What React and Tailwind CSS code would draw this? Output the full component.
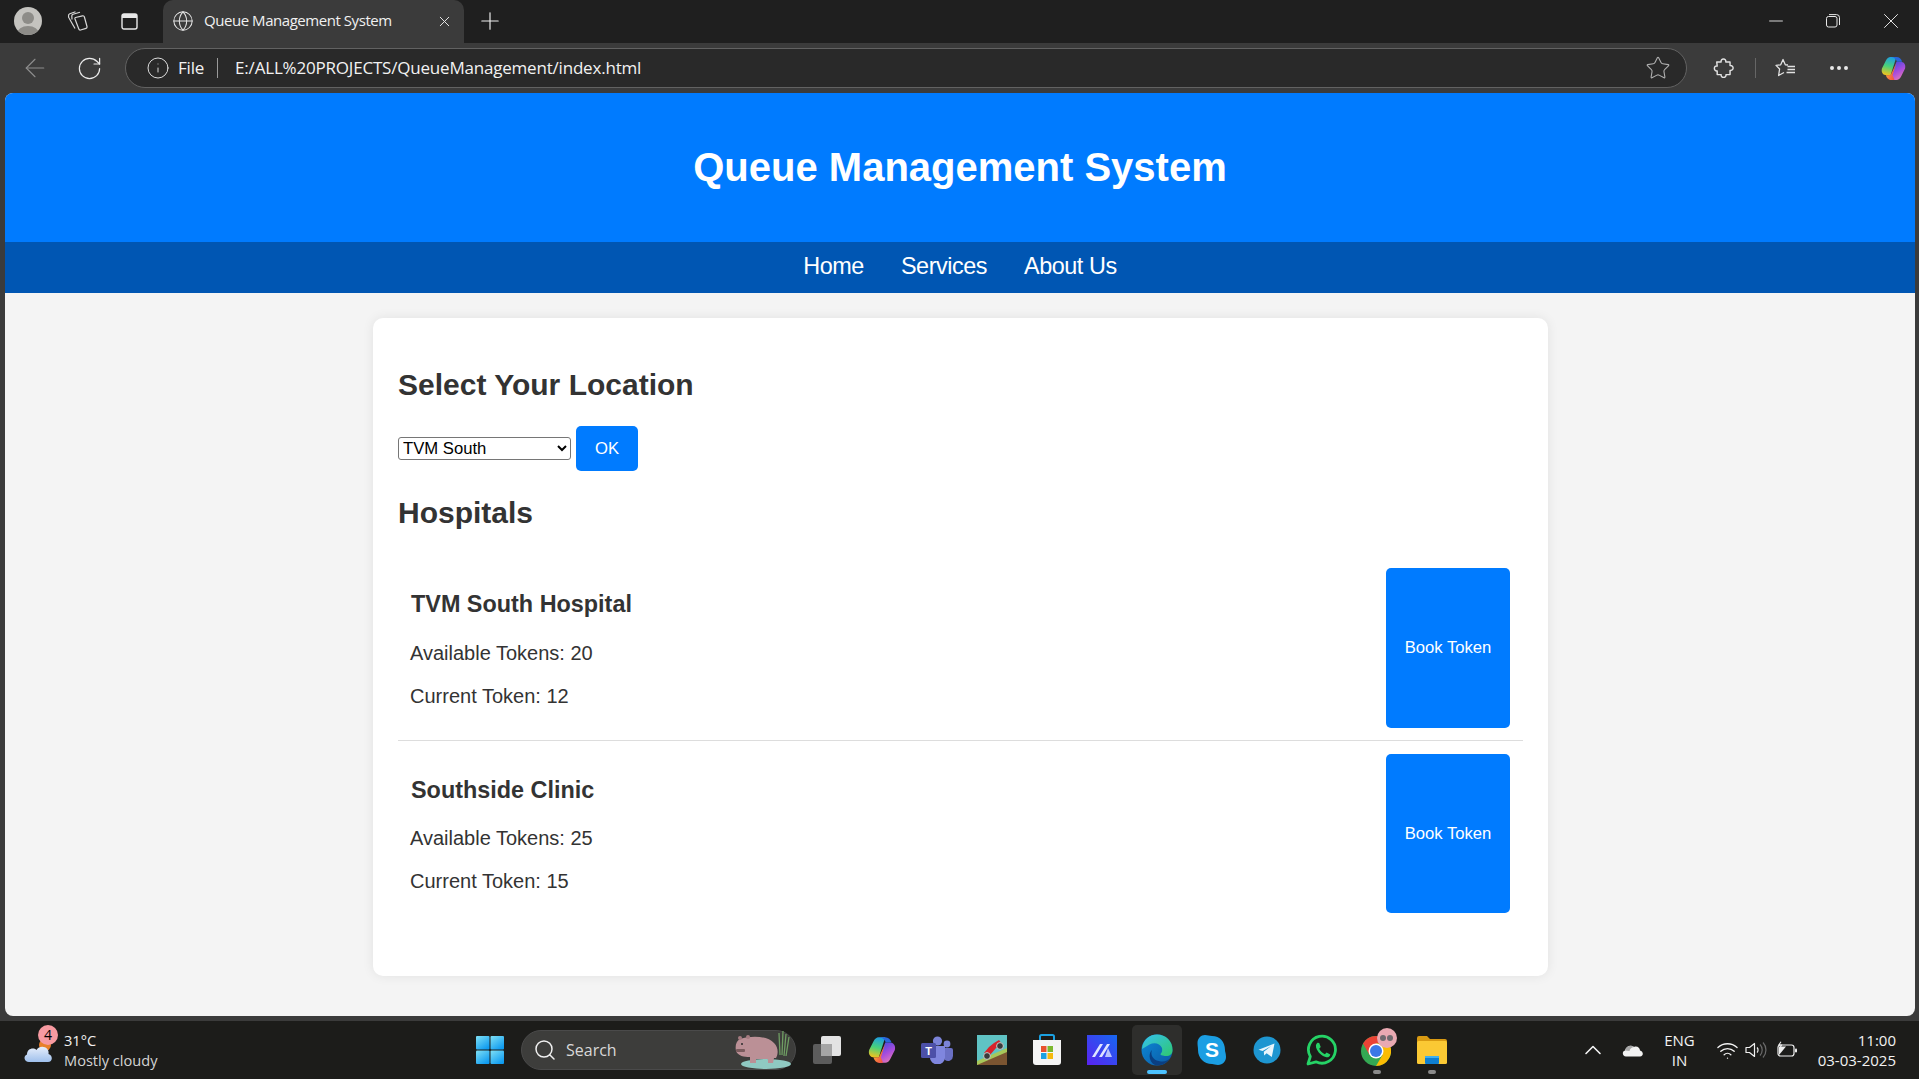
import React from "react";
import { Globe, X, Plus, ArrowLeft, RotateCw, Info, Star, Minus, Search, ChevronUp, Wifi, Ellipsis } from "lucide-react";

const sans = "font-['Liberation_Sans',Arial,sans-serif]";
const ui = "font-['Open_Sans','Noto_Sans',sans-serif]";

function TabsIcon() {
  return (
    <svg width="21" height="20" viewBox="0 0 21 20" fill="none" stroke="#d8d8d8" strokeWidth="1.2" strokeLinejoin="round">
      <path d="M8.5 6.5 L15.5 4.8 Q17 4.5 17.4 6 L20 15.5 Q20.3 17 19 17.4 L13.6 19 Q12.2 19.3 11.8 18 L8 8 Q7.7 6.8 8.5 6.5 Z" />
      <path d="M5 8.5 L4.8 4.8 Q4.8 3.6 6 3.3 L13 1.2" />
      <path d="M1.8 7 L1.5 5 Q1.4 3.4 2.8 2.8 L8.5 0.8" />
      <path d="M2 7 L8 17.5" />
    </svg>
  );
}
function VerticalTabs() {
  return (
    <svg width="17" height="17" viewBox="0 0 17 17" fill="none">
      <rect x="1" y="1" width="15" height="15" rx="2" stroke="#e8e8e8" strokeWidth="1.4" />
      <rect x="1" y="1" width="15" height="4" fill="#e8e8e8" />
    </svg>
  );
}
function Avatar() {
  return (
    <svg width="28" height="28" viewBox="0 0 28 28">
      <defs><clipPath id="av"><circle cx="14" cy="14" r="14" /></clipPath></defs>
      <circle cx="14" cy="14" r="14" fill="#c4c3bf" />
      <g clipPath="url(#av)">
        <circle cx="14" cy="11" r="6" fill="#8d8c88" />
        <ellipse cx="14" cy="27" rx="11" ry="8" fill="#8d8c88" />
      </g>
    </svg>
  );
}
function Restore() {
  return (
    <svg width="14" height="14" viewBox="0 0 14 14" fill="none" stroke="#e8e8e8" strokeWidth="1">
      <rect x="0.5" y="2.5" width="10.5" height="10.5" rx="2" />
      <path d="M3 .6h7.5a3 3 0 0 1 3 3V11" />
    </svg>
  );
}
function Puzzle() {
  return (
    <svg width="22" height="22" viewBox="0 0 20 20" fill="none" stroke="#e2e2e2" strokeWidth="1.3" strokeLinejoin="round">
      <path d="M7.4 4.5 C6.6 1 12.4 1 11.6 4.5 L15.5 4.5 L15.5 7.8 C19.2 7.2 19.2 12.8 15.5 12.2 L15.5 16 L11.8 16 C12.4 19.4 6.8 19.4 7.4 16 L3.8 16 L3.8 12.6 C0.4 13.2 0.4 7.6 3.8 8.2 L3.4 4.5 Z" />
    </svg>
  );
}
function FavStar() {
  return (
    <svg width="22" height="20" viewBox="0 0 22 20" fill="none" stroke="#e2e2e2" strokeWidth="1.3" strokeLinejoin="round">
      <path d="M13 7 L10.3 6.8 L8 1.5 L5.7 6.8 L1 7.4 L4.6 11 L3.6 17.5 L9 14.5" />
      <path d="M12.5 8.5h7.5M12.5 11.5h7.5M11.5 14.5h8.5" />
    </svg>
  );
}
function CopilotIcon({ size = 27 }) {
  return (
    <svg width={size} height={size} viewBox="0 0 28 28">
      <defs>
        <linearGradient id="cpA" x1="0.5" y1="0" x2="0.3" y2="1">
          <stop offset="0" stopColor="#1f9fe0" /><stop offset="0.5" stopColor="#48d27a" /><stop offset="1" stopColor="#f6c21c" />
        </linearGradient>
        <linearGradient id="cpB" x1="0.3" y1="0" x2="0.8" y2="1">
          <stop offset="0" stopColor="#4a4ce0" /><stop offset="0.5" stopColor="#a84ddc" /><stop offset="1" stopColor="#ee7fb0" />
        </linearGradient>
        <linearGradient id="cpC" x1="0" y1="0" x2="1" y2="1">
          <stop offset="0" stopColor="#ffa13c" /><stop offset="1" stopColor="#ee4444" />
        </linearGradient>
      </defs>
      <path d="M17 7 H21 C25 7 27 10 26 14 L22 22 C21 24.5 19 26 17 26 H11 L17 7 Z" fill="url(#cpB)" />
      <path d="M11 2 H17 L11 21 H7 C3 21 1 18 2 14 L6 6 C7 3.5 9 2 11 2 Z" fill="url(#cpA)" />
      <path d="M12 2 H17 C20 2 22 4 23 7 H17.5 C17 4.5 15 2.5 12 2 Z" fill="#2a66dc" />
      <path d="M6 21 H11 L11.5 23 C12 24.5 13.5 26 16 26 H11.5 C9 26 7 24 6 21 Z" fill="url(#cpC)" />
      <path d="M9 21 H11 L17 8 L13 21 L15 26 H11 C10 25 9 23 9 21 Z" fill="url(#cpC)" />
    </svg>
  );
}
function Hippo() {
  return (
    <svg width="62" height="38" viewBox="0 0 62 38">
      <ellipse cx="34" cy="33" rx="25" ry="5" fill="#8fc9c2" />
      <path d="M47 2 L48 24 M51 0 L50 24 M54 3 L52 25 M57 6 L54 25" stroke="#6f9d63" strokeWidth="1.3" fill="none" />
      <path d="M8 8 C20 4 36 5 42 12 C47 17 46 24 44 27 L42 27 L41 32 L36 32 L36 28 L24 28 L24 32 L18 32 L18 26 C12 26 6 25 4 20 C3 15 4 10 8 8 Z" fill="#bb9096" />
      <circle cx="8" cy="7" r="2" fill="#a47b80" />
      <circle cx="16" cy="6" r="2" fill="#a47b80" />
      <circle cx="10" cy="13" r="1" fill="#2b2b2b" />
      <rect x="4" y="18" width="9" height="3" fill="#7a5b5d" rx="1" />
    </svg>
  );
}
function WinLogo() {
  return (
    <svg width="30" height="30" viewBox="0 0 30 30">
      <defs>
        <linearGradient id="win" x1="0" y1="0" x2="0.7" y2="1">
          <stop offset="0" stopColor="#7fe0f5" /><stop offset="1" stopColor="#0f9bf0" />
        </linearGradient>
      </defs>
      <rect x="1" y="1" width="13.5" height="13.5" rx="1" fill="url(#win)" />
      <rect x="15.5" y="1" width="13.5" height="13.5" rx="1" fill="url(#win)" />
      <rect x="1" y="15.5" width="13.5" height="13.5" rx="1" fill="url(#win)" />
      <rect x="15.5" y="15.5" width="13.5" height="13.5" rx="1" fill="url(#win)" />
    </svg>
  );
}
function TaskView() {
  return (
    <svg width="30" height="30" viewBox="0 0 30 30">
      <rect x="1" y="9" width="19" height="20" rx="2" fill="#5c5c5c" />
      <rect x="9" y="1" width="20" height="20" rx="2" fill="#e3e3e3" />
      <rect x="9" y="9" width="11" height="12" fill="#a5a5a5" />
    </svg>
  );
}
function Teams() {
  return (
    <svg width="32" height="28" viewBox="0 0 32 28">
      <circle cx="26" cy="8" r="3.4" fill="#7b83d8" />
      <path d="M20 12 h10 a2 2 0 0 1 2 2 v6 a5 5 0 0 1 -8 4 Z" fill="#6a70c4" />
      <circle cx="16.5" cy="5" r="4.6" fill="#7b83d8" />
      <path d="M9 10 h15 v12 a7 6 0 0 1 -15 0 Z" fill="#7f86de" />
      <rect x="0" y="7" width="15" height="15" rx="1.5" fill="#4c50a8" />
      <text x="7.5" y="18.5" textAnchor="middle" fill="#fff" fontSize="11" fontWeight="700" fontFamily="Liberation Sans">T</text>
    </svg>
  );
}
function HillGame() {
  return (
    <svg width="30" height="30" viewBox="0 0 30 30">
      <rect width="30" height="30" fill="#5fc3c4" />
      <path d="M0 26 L30 13 V30 H0 Z" fill="#a7c85a" />
      <path d="M0 30 L30 17 V30 H0 Z" fill="#7b5531" />
      <path d="M7 18 L12 12 L17 8 L22 5 L25 9 L19 13 L13 20 Z" fill="#d8232a" />
      <circle cx="10" cy="21" r="3.4" fill="#3a3a3a" stroke="#ccc" />
      <circle cx="23" cy="11" r="3.4" fill="#3a3a3a" stroke="#ccc" />
    </svg>
  );
}
function StoreIcon() {
  return (
    <svg width="30" height="32" viewBox="0 0 30 32">
      <path d="M8 6 V2.5 a1.5 1.5 0 0 1 1.5 -1.5 h11 a1.5 1.5 0 0 1 1.5 1.5 V6" fill="none" stroke="#1ba1e2" strokeWidth="2" />
      <path d="M1 6 H29 V28 a3 3 0 0 1 -3 3 H4 a3 3 0 0 1 -3 -3 Z" fill="#f4f4f4" />
      <rect x="9" y="12" width="5.5" height="6" fill="#e8512d" />
      <rect x="15.5" y="12" width="5.5" height="6" fill="#7cb82f" />
      <rect x="9" y="19" width="5.5" height="6" fill="#1ba1e2" />
      <rect x="15.5" y="19" width="5.5" height="6" fill="#f5b90d" />
    </svg>
  );
}
function MaIcon() {
  return (
    <svg width="30" height="30" viewBox="0 0 30 30">
      <defs>
        <linearGradient id="ma" x1="1" y1="0" x2="0" y2="1">
          <stop offset="0" stopColor="#1668f0" /><stop offset="1" stopColor="#5a22f0" />
        </linearGradient>
      </defs>
      <rect width="30" height="30" fill="url(#ma)" />
      <path d="M5 22 L13 9 H16 L8 22 Z M12 22 L20 9 H23 L15 22 Z" fill="#dfe4ff" />
      <path d="M21 13 L25 22 H18 Z" fill="#b9c3ff" />
    </svg>
  );
}
function Edge() {
  return (
    <svg width="32" height="32" viewBox="0 0 32 32">
      <defs>
        <linearGradient id="edA" x1="0" y1="0" x2="1" y2="1">
          <stop offset="0" stopColor="#35c1f1" /><stop offset="1" stopColor="#2fc86e" />
        </linearGradient>
        <linearGradient id="edB" x1="0" y1="0" x2="1" y2="1">
          <stop offset="0" stopColor="#0c8bd8" /><stop offset="1" stopColor="#0c59a4" />
        </linearGradient>
      </defs>
      <circle cx="16" cy="16" r="15.5" fill="url(#edB)" />
      <path d="M1 15 C2 5 9 .5 16 .5 C25 .5 31.5 7 31.5 16 C31.5 20 29 22 25 22 C22 22 19 21 19.5 20 C21 18 21.5 17 21 14 C19 9 13 8 8.5 10.5 C5 12.5 2.5 14 1 15 Z" fill="url(#edA)" />
      <path d="M14 31 C8 28 7 20 11 16 C9 21 12 27 20 27.5 C24 28 27 26.5 29 24 C27 28 21 32.5 14 31 Z" fill="#0a3f82" />
    </svg>
  );
}
function Skype() {
  return (
    <svg width="30" height="32" viewBox="0 0 30 32">
      <path d="M8 1 C11 1 12 2 15 2 C23 2 28 8 28 16 C28 18 29 19 29 23 C29 27 26 31 21 31 C18 31 17 30 15 30 C7 30 1 24 1 16 C1 13 0.5 12 0.5 9 C0.5 4.5 4 1 8 1 Z" fill="#1b9ee3" />
      <text x="15" y="23" textAnchor="middle" fill="#fff" fontSize="21" fontWeight="700" fontFamily="Liberation Sans">S</text>
    </svg>
  );
}
function Telegram() {
  return (
    <svg width="28" height="28" viewBox="0 0 28 28">
      <circle cx="14" cy="14" r="13.5" fill="#1e96d1" />
      <path d="M5.5 13.8 L21.5 7.5 L18.8 21 L13.6 17.3 L11.2 19.6 L10.8 15.7 L18.2 10 L9.6 15 Z" fill="#eaf6fc" />
    </svg>
  );
}
function WhatsApp() {
  return (
    <svg width="32" height="32" viewBox="0 0 32 32">
      <path d="M2 30 L4.3 22.5 A13.5 13.5 0 1 1 10 27.8 Z" fill="none" stroke="#25d366" strokeWidth="2.8" strokeLinejoin="round" />
      <path d="M11.5 8.8 C9.6 10 9.3 12.6 11 15.8 C13 19.5 16.5 22.6 20.4 23.2 C22.5 23.5 24 22.3 24.3 20.4 L20.6 18.5 L18.9 20.2 C16.6 19.3 14.3 17.1 13.2 14.7 L14.7 13 L13.2 9 Z" fill="#25d366" />
    </svg>
  );
}
function ChromeIcon() {
  return (
    <span className="relative block h-[32px] w-[32px]">
      <svg width="30" height="30" viewBox="0 0 30 30" className="absolute left-0 top-[2px]">
        <circle cx="15" cy="15" r="15" fill="#34a853" />
        <path d="M15 0 A15 15 0 0 1 28 7.5 L15 7.5 L8.5 19 L2 7.5 A15 15 0 0 1 15 0 Z" fill="#ea4335" />
        <path d="M28 7.5 A15 15 0 0 1 15 30 L21.5 19 L15 7.5 Z" fill="#fbbc04" />
        <circle cx="15" cy="15" r="7.5" fill="#fff" />
        <circle cx="15" cy="15" r="6" fill="#3b78e7" />
      </svg>
      <span className="absolute left-[16px] top-[-6px] flex h-[20px] w-[20px] items-center justify-center gap-[1px] rounded-full bg-[#e9a9b2]">
        <span className="h-[6px] w-[6px] rounded-full bg-[#6f6a6f]" />
        <span className="h-[6px] w-[6px] rounded-full bg-[#6f6a6f]" />
      </span>
    </span>
  );
}
function Folder() {
  return (
    <svg width="30" height="30" viewBox="0 0 30 30">
      <path d="M0 3 a2 2 0 0 1 2 -2 h8 l3 3 h15 a2 2 0 0 1 2 2 v4 H0 Z" fill="#d99a12" />
      <rect y="6" width="30" height="23" rx="1.5" fill="#fbc934" />
      <rect x="8" y="21" width="14" height="8" rx="1" fill="#0f7fd0" />
      <rect x="8" y="21" width="14" height="2" fill="#3fb0ee" />
    </svg>
  );
}
function Weather() {
  return (
    <svg width="32" height="28" viewBox="0 0 32 28">
      <defs>
        <linearGradient id="cl" x1="0" y1="0" x2="0" y2="1">
          <stop offset="0" stopColor="#e6eefb" /><stop offset="1" stopColor="#9fc0ec" />
        </linearGradient>
      </defs>
      <circle cx="22" cy="9" r="6" fill="#e8802a" />
      <path d="M6 26 C1 26 0 20 4 18.5 C4 13 10 11 13.5 14 C17 8 27 11 25.5 18 C30 19 30 26 25 26 Z" fill="url(#cl)" />
    </svg>
  );
}
function Cloud() {
  return (
    <svg width="22" height="14" viewBox="0 0 22 14">
      <path d="M4 13.5 C0.5 13.5 -0.5 8.5 3 7.5 C4 3 9 1.5 12 4 C15 2.5 18 5 18 7.5 C21.5 8 22 13.5 18 13.5 Z" fill="#f2f2f2" />
      <path d="M3 7.5 C4 3 9 1.5 12 4 C9 4.5 8 6 7.5 8 Z" fill="#a8a8a8" />
    </svg>
  );
}
function Speaker() {
  return (
    <svg width="22" height="18" viewBox="0 0 22 18" fill="none" stroke="#f0f0f0" strokeWidth="1.2">
      <path d="M1 6.5 H4.5 L9.5 2.5 V15.5 L4.5 11.5 H1 Z" strokeLinejoin="round" />
      <path d="M12 6.5 a3.5 3.5 0 0 1 0 5" />
      <path d="M15 3.5 a8 8 0 0 1 0 11 M18 1.5 a11 11 0 0 1 0 15" stroke="#6b6b6b" />
    </svg>
  );
}
function Battery() {
  return (
    <svg width="22" height="18" viewBox="0 0 22 18" fill="none">
      <rect x="1" y="4" width="16" height="11" rx="2.5" stroke="#f0f0f0" strokeWidth="1.2" />
      <rect x="18" y="7.5" width="2" height="4" rx="1" fill="#f0f0f0" />
      <path d="M2 14 L2 5.5 L9 5.5 Z" fill="#f0f0f0" />
      <path d="M4 0.8 L1.8 4 H4.5 L3 7" stroke="#f0f0f0" strokeWidth="1.1" />
    </svg>
  );
}

function TabStrip() {
  return (
    <div className={`flex h-[43px] items-end bg-[#1f1f1f] text-[#f0f0f0] ${ui}`}>
      <div className="flex h-[43px] w-[163px] items-center pb-[1px] pl-[14px]">
        <span className="flex w-[28px] items-center"><Avatar /></span>
        <span className="ml-[25px] flex w-[21px]"><TabsIcon /></span>
        <span className="ml-[33px] flex w-[17px]"><VerticalTabs /></span>
      </div>
      <div className="flex h-[43px] w-[301px] items-center rounded-t-[10px] bg-[#3b3b3b] pb-[1px] pl-[9px]">
        <Globe size={22} strokeWidth={1.1} color="#e6e6e6" />
        <span className="ml-[10px] mb-[1px] w-[207px] truncate text-[15px] tracking-[-0.45px]">Queue Management System</span>
        <X size={17} strokeWidth={1.4} color="#e6e6e6" className="ml-[25px]" />
      </div>
      <div className="flex h-[43px] items-center pb-[1px] pl-[12px]">
        <Plus size={28} strokeWidth={1} color="#f0f0f0" />
      </div>
      <div className="ml-auto flex h-[43px] items-center pb-[1px] pr-[15px]">
        <Minus size={22} strokeWidth={1} color="#e8e8e8" />
        <span className="ml-[39px] flex"><Restore /></span>
        <span className="ml-[38px] flex"><X size={26} strokeWidth={0.9} color="#e8e8e8" /></span>
      </div>
    </div>
  );
}

function Toolbar() {
  return (
    <div className={`flex h-[50px] items-center bg-[#3b3b3b] text-[#f2f2f2] ${ui}`}>
      <ArrowLeft size={30} strokeWidth={0.9} color="#8d8d8d" className="ml-[20px]" />
      <RotateCw size={27} strokeWidth={1.05} color="#ececec" className="ml-[26px]" />
      <div className="ml-[22px] flex h-[40px] w-[1562px] items-center rounded-[20px] border border-[#626262] bg-[#292929] pl-[20px] pr-[15px]">
        <Info size={24} strokeWidth={0.95} color="#e4e4e4" />
        <span className="ml-[8px] text-[17px] tracking-[-0.2px]">File</span>
        <span className="ml-[13px] h-[20px] w-px bg-[#9a9a9a]" />
        <span className="ml-[17px] text-[17px] tracking-[-0.2px]">E:/ALL%20PROJECTS/QueueManagement/index.html</span>
        <Star size={26} strokeWidth={1} color="#b0b0b0" className="ml-auto" />
      </div>
      <span className="ml-[26px] flex"><Puzzle /></span>
      <span className="ml-[20px] h-[20px] w-px bg-[#666]" />
      <span className="ml-[19px] flex"><FavStar /></span>
      <Ellipsis size={24} strokeWidth={2} color="#e8e8e8" className="ml-[30px]" />
      <span className="ml-[29px] flex"><CopilotIcon /></span>
    </div>
  );
}

function Hospital({ name, available, current, extra, btn, gap }) {
  return (
    <div className={`flex items-start justify-between ${extra}`}>
      <div className="pl-[12px] pt-[23px]">
        <h3 className="pl-[1px] text-[23.4px] font-bold leading-[27px]">{name}</h3>
        <p className={`text-[20px] leading-[23px] ${gap}`}>Available Tokens: {available}</p>
        <p className="mt-[20px] text-[20px] leading-[23px]">Current Token: {current}</p>
      </div>
      <button className={`mr-[13px] flex w-[124px] items-center justify-center rounded-[5px] bg-[#007bff] text-[16.67px] text-white ${btn}`}>
        Book Token
      </button>
    </div>
  );
}

function Page() {
  return (
    <div className={`flex min-h-0 flex-1 flex-col overflow-hidden rounded-[8px] bg-[#f4f4f4] text-[#333] ${sans}`}>
      <header className="flex h-[149px] items-start justify-center bg-[#007bff] pt-[51px] text-white">
        <h1 className="text-[40px] font-bold leading-[46px]">Queue Management System</h1>
      </header>
      <nav className="flex h-[51px] items-center justify-center gap-[37px] bg-[#0056b3] pb-[2px] text-[23.4px] tracking-[-0.45px] text-white">
        <a>Home</a>
        <a>Services</a>
        <a>About Us</a>
      </nav>
      <main className="ml-[368px] mt-[25px] h-[658px] w-[1175px] rounded-[10px] bg-white px-[25px] pt-[49px] shadow-[0_0_12px_rgba(0,0,0,0.08)]">
        <h2 className="text-[30px] font-bold leading-[35px]">Select Your Location</h2>
        <div className="mt-[24px] flex items-center">
          <select className="h-[23px] w-[173px] rounded-[3px] border border-[#767676] bg-white text-[16.67px] leading-[19px] text-black" defaultValue="TVM South">
            <option>TVM South</option>
          </select>
          <button className="ml-[5px] h-[45px] w-[62px] rounded-[5px] bg-[#007bff] text-[16.67px] text-white">OK</button>
        </div>
        <h2 className="mt-[24px] text-[30px] font-bold leading-[35px]">Hospitals</h2>
        <div className="mt-[38px]">
          <Hospital name="TVM South Hospital" available="20" current="12" extra="h-[173px] border-b border-[#ddd]" btn="h-[160px] pb-[2px]" gap="mt-[24px]" />
          <Hospital name="Southside Clinic" available="25" current="15" extra="mt-[13px]" btn="h-[159px]" gap="mt-[23px]" />
        </div>
      </main>
    </div>
  );
}

function Taskbar() {
  const iconBox = "flex w-[55px] justify-center items-center";
  return (
    <div className={`relative flex h-[58px] items-center bg-[#1c1c1a] text-[#f2f2f2] ${ui}`}>
      <div className="relative ml-[23px] flex w-[452px] items-center">
        <span className="flex w-[33px]"><Weather /></span>
        <span className="absolute left-[15px] top-[-5px] flex h-[20px] w-[20px] items-center justify-center rounded-full bg-[#f79aa1] text-[14px] leading-none text-black">4</span>
        <div className="ml-[8px] text-[14.6px] leading-[20px]">
          <div>31°C</div>
          <div className="text-[#d4d4d4]">Mostly cloudy</div>
        </div>
      </div>
      <span className="flex w-[30px]"><WinLogo /></span>
      <div className="ml-[16px] flex h-[40px] w-[275px] items-center justify-between rounded-[20px] border border-[#4a4a4a] bg-[#3d3d3b] pl-[11px] pr-[1px]">
        <span className="flex items-center">
          <Search size={24} strokeWidth={1.5} color="#f0f0f0" />
          <span className="ml-[9px] text-[16px] text-[#d8d8d8]">Search</span>
        </span>
        <Hippo />
      </div>
      <div className="ml-[3px] flex items-center">
        <span className={iconBox}><TaskView /></span>
        <span className={iconBox}><CopilotIcon size={30} /></span>
        <span className={iconBox}><Teams /></span>
        <span className={iconBox}><HillGame /></span>
        <span className={iconBox}><StoreIcon /></span>
        <span className={iconBox}><MaIcon /></span>
        <span className={iconBox}>
          <span className="relative flex h-[50px] w-[50px] items-center justify-center rounded-[5px] bg-[#2e2e2c]">
            <Edge />
            <span className="absolute bottom-[1px] h-[4px] w-[20px] rounded-full bg-[#4cc2ff]" />
          </span>
        </span>
        <span className={iconBox}><Skype /></span>
        <span className={iconBox}><Telegram /></span>
        <span className={iconBox}><WhatsApp /></span>
        <span className={`relative ${iconBox} h-[50px]`}>
          <ChromeIcon />
          <span className="absolute bottom-[1px] h-[4px] w-[8px] rounded-full bg-[#8a8a8a]" />
        </span>
        <span className={`relative ${iconBox} h-[50px]`}>
          <Folder />
          <span className="absolute bottom-[1px] h-[4px] w-[8px] rounded-full bg-[#8a8a8a]" />
        </span>
      </div>
      <div className="ml-auto flex items-center pr-[23px]">
        <ChevronUp size={28} strokeWidth={1.4} color="#f2f2f2" />
        <span className="ml-[15px] flex"><Cloud /></span>
        <div className="ml-[20px] text-center text-[15px] leading-[20px]">
          <div>ENG</div>
          <div>IN</div>
        </div>
        <Wifi size={23} strokeWidth={1.4} color="#f2f2f2" className="ml-[21px]" />
        <span className="ml-[6px] flex"><Speaker /></span>
        <span className="ml-[10px] flex"><Battery /></span>
        <div className="ml-[19px] text-right text-[15px] leading-[20px]">
          <div>11:00</div>
          <div>03-03-2025</div>
        </div>
      </div>
    </div>
  );
}

export default function App() {
  return (
    <div className="flex h-[1079px] w-[1919px] flex-col overflow-hidden bg-[#3b3b3b]">
      <TabStrip />
      <Toolbar />
      <div className="flex min-h-0 flex-1 pb-[5px] pl-[5px] pr-[4px]">
        <Page />
      </div>
      <Taskbar />
    </div>
  );
}
